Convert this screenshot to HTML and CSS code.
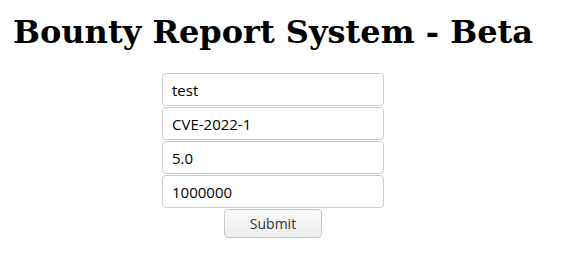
FILE: index.html
```html
<!DOCTYPE html>
<html>
<head>
<meta charset="utf-8">
<link rel="stylesheet" href="styles.css">
</head>
<body>
<main class="page">
  <h1 class="title">Bounty Report System - Beta</h1>
  <form class="report-form">
    <input class="field" type="text" value="test">
    <input class="field" type="text" value="CVE-2022-1">
    <input class="field" type="text" value="5.0">
    <input class="field" type="text" value="1000000">
    <button class="submit" type="button">Submit</button>
  </form>
</main>
</body>
</html>
```

FILE: styles.css
```css
html, body {
  margin: 0;
  padding: 0;
  background: #ffffff;
}

.page {
  width: 546px;
  text-align: center;
}

.title {
  margin: 13px 0 22px;
  font-family: "DejaVu Serif", serif;
  font-size: 32px;
  font-weight: bold;
  color: #000;
}

.report-form {
  display: flex;
  flex-direction: column;
  align-items: center;
  gap: 1px;
}

.field {
  box-sizing: border-box;
  width: 222px;
  height: 33px;
  margin: 0;
  padding: 0 9px;
  border: 1px solid #cccccc;
  border-radius: 4px;
  font-family: "Open Sans", sans-serif;
  font-size: 15px;
  color: #000;
  background: #fff;
  outline: none;
}

.submit {
  box-sizing: border-box;
  width: 98px;
  height: 29px;
  margin: 0;
  padding: 0;
  border: 1px solid #c8c8c8;
  border-radius: 4px;
  background: linear-gradient(#fafafa, #ececec);
  font-family: "Open Sans", sans-serif;
  font-size: 14px;
  color: #333;
}
```
